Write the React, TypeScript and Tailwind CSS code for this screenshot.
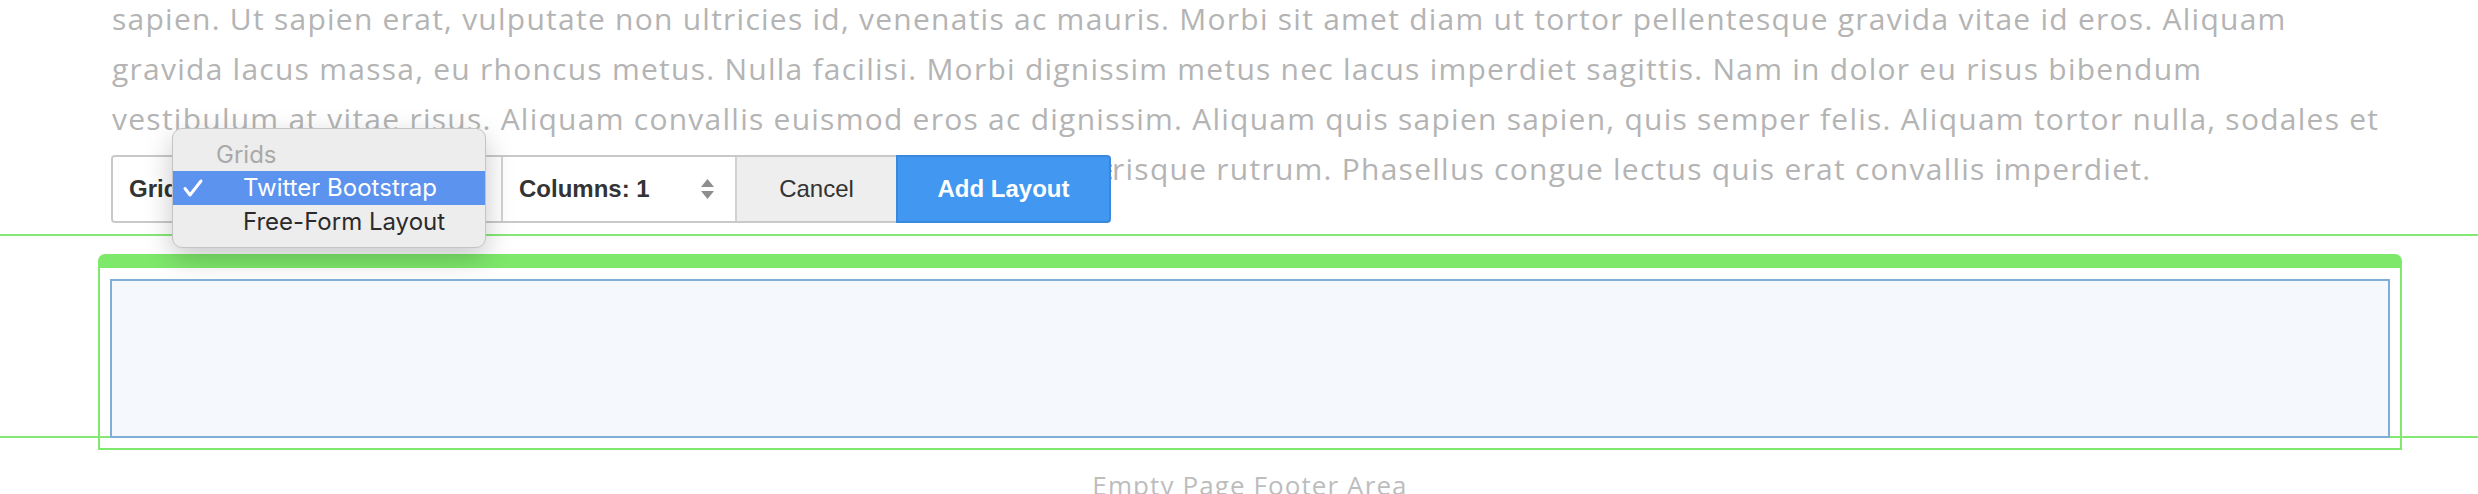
import { ReactNode } from 'react'

const guideGreen = 'bg-[#84e874]'

function Spinner() {
  return (
    <svg width="15" height="22" viewBox="0 0 15 22" className="flex-shrink-0">
      <path d="M7.5 1 L14 9 L1 9 Z" fill="#8e8e8e" />
      <path d="M1 13 L14 13 L7.5 21 Z" fill="#8e8e8e" />
    </svg>
  )
}

function Section({ children, className }: { children: ReactNode; className: string }) {
  return <div className={'flex h-full items-center ' + className}>{children}</div>
}

function Toolbar() {
  return (
    <div className="absolute left-[111px] top-[155px] flex h-[68px] w-[1000px] font-['Liberation_Sans',Arial,sans-serif] text-[24px] text-[#333]">
      <div className="flex h-full flex-1 overflow-hidden rounded-l-[4px] border-y-2 border-l-2 border-[#c9c9c9]">
        <Section className="w-[390px] justify-between border-r-2 border-[#d2d2d2] bg-white pl-[16px] pr-[20px]">
          <span className="font-bold">Grid: Twitter Bootstrap</span>
          <Spinner />
        </Section>
        <Section className="w-[234px] justify-between border-r-2 border-[#d2d2d2] bg-white pl-[16px] pr-[20px]">
          <span className="font-bold">Columns: 1</span>
          <Spinner />
        </Section>
        <Section className="flex-1 justify-center bg-[#eeeeee]">
          <span>Cancel</span>
        </Section>
      </div>
      <button className="flex h-full w-[215px] items-center justify-center rounded-r-[4px] border-2 border-[#3a88dc] bg-[#4298f0] font-bold text-white">
        Add Layout
      </button>
    </div>
  )
}

function GridMenu() {
  return (
    <div className="absolute left-[172px] top-[128px] w-[314px] rounded-[10px] border border-[#c4c4c4] bg-[#ededed] pb-[8px] pt-[9px] font-['Inter',sans-serif] text-[24px] shadow-[0_10px_28px_rgba(0,0,0,0.22)]">
      <div className="flex h-[33px] items-center pl-[43px] text-[#a9a9a9]">Grids</div>
      <div className="flex h-[34px] items-center bg-[#5b93ef] text-white">
        <svg width="46" height="20" viewBox="0 0 46 20" className="flex-shrink-0">
          <path d="M12 10.5 L17 17 L28 3" fill="none" stroke="white" strokeWidth="3" strokeLinecap="round" strokeLinejoin="round" />
        </svg>
        <span className="pl-[24px]">Twitter Bootstrap</span>
      </div>
      <div className="flex h-[34px] items-center pl-[70px] text-[#2b2b2b]">Free-Form Layout</div>
    </div>
  )
}

export default function App() {
  return (
    <div className="relative h-[494px] w-[2478px] overflow-hidden bg-white">
      <div className="-mt-[6px] whitespace-nowrap pl-[112px] font-['Open_Sans',sans-serif] text-[30px] leading-[50px] tracking-[1.25px] text-[#b4b4b4]">
        <div>sapien. Ut sapien erat, vulputate non ultricies id, venenatis ac mauris. Morbi sit amet diam ut tortor pellentesque gravida vitae id eros. Aliquam</div>
        <div>gravida lacus massa, eu rhoncus metus. Nulla facilisi. Morbi dignissim metus nec lacus imperdiet sagittis. Nam in dolor eu risus bibendum</div>
        <div>vestibulum at vitae risus. Aliquam convallis euismod eros ac dignissim. Aliquam quis sapien sapien, quis semper felis. Aliquam tortor nulla, sodales et</div>
        <div>
          <span className="inline-block w-[1000px] overflow-hidden align-top">tincidunt ante, vel aliquet nibh. Nam nec magna sit amet quam scele</span>
          risque rutrum. Phasellus congue lectus quis erat convallis imperdiet.
        </div>
      </div>

      <div className={'mt-[40px] h-[2px] ' + guideGreen} />

      <div className="relative mt-[18px]">
        <div className="ml-[98px] w-[2304px]">
          <div className="h-[14px] rounded-t-[7px] bg-[#7ee86b]" />
          <div className="border-x-2 border-b-2 border-[#80e86e] px-[10px] pb-[10px] pt-[11px]">
            <div className="relative z-10 h-[159px] border-2 border-[#80aed6] bg-[#f5f8fd]" />
          </div>
        </div>
        <div className={'absolute left-0 right-0 top-[182px] h-[2px] ' + guideGreen} />
      </div>

      <div className="ml-[98px] mt-[17px] w-[2304px] text-center font-['Open_Sans',sans-serif] text-[26px] leading-[36px] tracking-[1.1px] text-[#bdbdbd]">
        Empty Page Footer Area
      </div>

      <Toolbar />
      <GridMenu />
    </div>
  )
}
